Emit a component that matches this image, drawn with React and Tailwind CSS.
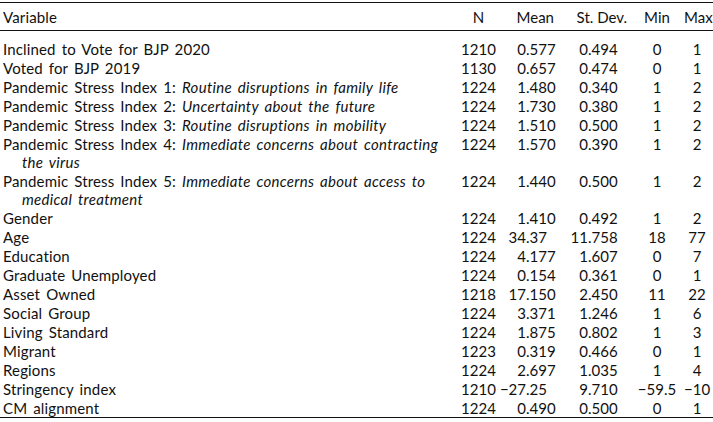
const rows = [
  { label: "Inclined to Vote for BJP 2020", n: "1210", mean: "0.577", sd: "0.494", min: "0", max: "1" },
  { label: "Voted for BJP 2019", n: "1130", mean: "0.657", sd: "0.474", min: "0", max: "1" },
  { label: "Pandemic Stress Index 1: ", em: "Routine disruptions in family life", n: "1224", mean: "1.480", sd: "0.340", min: "1", max: "2" },
  { label: "Pandemic Stress Index 2: ", em: "Uncertainty about the future", n: "1224", mean: "1.730", sd: "0.380", min: "1", max: "2" },
  { label: "Pandemic Stress Index 3: ", em: "Routine disruptions in mobility", n: "1224", mean: "1.510", sd: "0.500", min: "1", max: "2" },
  { label: "Pandemic Stress Index 4: ", em: "Immediate concerns about contracting", em2: "the virus", n: "1224", mean: "1.570", sd: "0.390", min: "1", max: "2" },
  { label: "Pandemic Stress Index 5: ", em: "Immediate concerns about access to", em2: "medical treatment", n: "1224", mean: "1.440", sd: "0.500", min: "1", max: "2" },
  { label: "Gender", n: "1224", mean: "1.410", sd: "0.492", min: "1", max: "2" },
  { label: "Age", n: "1224", mean: "34.37", sd: "11.758", min: "18", max: "77" },
  { label: "Education", n: "1224", mean: "4.177", sd: "1.607", min: "0", max: "7" },
  { label: "Graduate Unemployed", n: "1224", mean: "0.154", sd: "0.361", min: "0", max: "1" },
  { label: "Asset Owned", n: "1218", mean: "17.150", sd: "2.450", min: "11", max: "22" },
  { label: "Social Group", n: "1224", mean: "3.371", sd: "1.246", min: "1", max: "6" },
  { label: "Living Standard", n: "1224", mean: "1.875", sd: "0.802", min: "1", max: "3" },
  { label: "Migrant", n: "1223", mean: "0.319", sd: "0.466", min: "0", max: "1" },
  { label: "Regions", n: "1224", mean: "2.697", sd: "1.035", min: "1", max: "4" },
  { label: "Stringency index", n: "1210", mean: "\u221227.25", sd: "9.710", min: "\u221259.5", max: "\u221210" },
  { label: "CM alignment", n: "1224", mean: "0.490", sd: "0.500", min: "0", max: "1" },
];

// integer part right-aligned up to the point, so the column lines up on decimals
function Dec({ value, intW }) {
  const [a, b] = value.split(".");
  return (
    <div className="flex">
      <span className={`${intW} flex justify-end whitespace-nowrap`}>{a}</span>
      <span>{b !== undefined ? "." + b : ""}</span>
    </div>
  );
}

export default function App() {
  return (
    <div
      className="w-[713px] h-[422px] bg-white text-[#111] text-[15px] leading-[18px] pt-[2px]"
      style={{ fontFamily: 'Lato, sans-serif' }}
    >
      <div className="border-t-[1.5px] border-b-[1.5px] border-[#111]">
        <div className="flex h-[28px] items-center border-b-[1.5px] border-[#111] pl-[3px]">
          <div className="flex-1 tracking-[0.15px]">Variable</div>
          <div className="w-[47px] text-center">N</div>
          <div className="w-[58px] text-right pr-[6px]">Mean</div>
          <div className="w-[70px] text-right pr-[3px]">St. Dev.</div>
          <div className="w-[54px] text-center">Min</div>
          <div className="w-[29px] text-center pr-[3px]">Max</div>
        </div>
        <div className="pt-[8px]">
          {rows.map((r, i) => (
            <div key={i} className="flex items-start pl-[3px] py-[0.5px]">
              <div className="flex-1 tracking-[0.15px] [word-spacing:2px]">
                <div>
                  {r.label}
                  {r.em && <i className="tracking-[0.3px]">{r.em}</i>}
                </div>
                {r.em2 && <div className="pl-[19px] italic tracking-[0.3px]">{r.em2}</div>}
              </div>
              <div className="w-[47px] text-center">{r.n}</div>
              <div className="w-[58px]">
                <Dec value={r.mean} intW="w-[24px]" />
              </div>
              <div className="w-[70px]">
                <Dec value={r.sd} intW="w-[28px]" />
              </div>
              <div className="w-[54px] text-center">{r.min}</div>
              <div className="w-[29px] text-center pr-[3px]">{r.max}</div>
            </div>
          ))}
        </div>
      </div>
    </div>
  );
}
